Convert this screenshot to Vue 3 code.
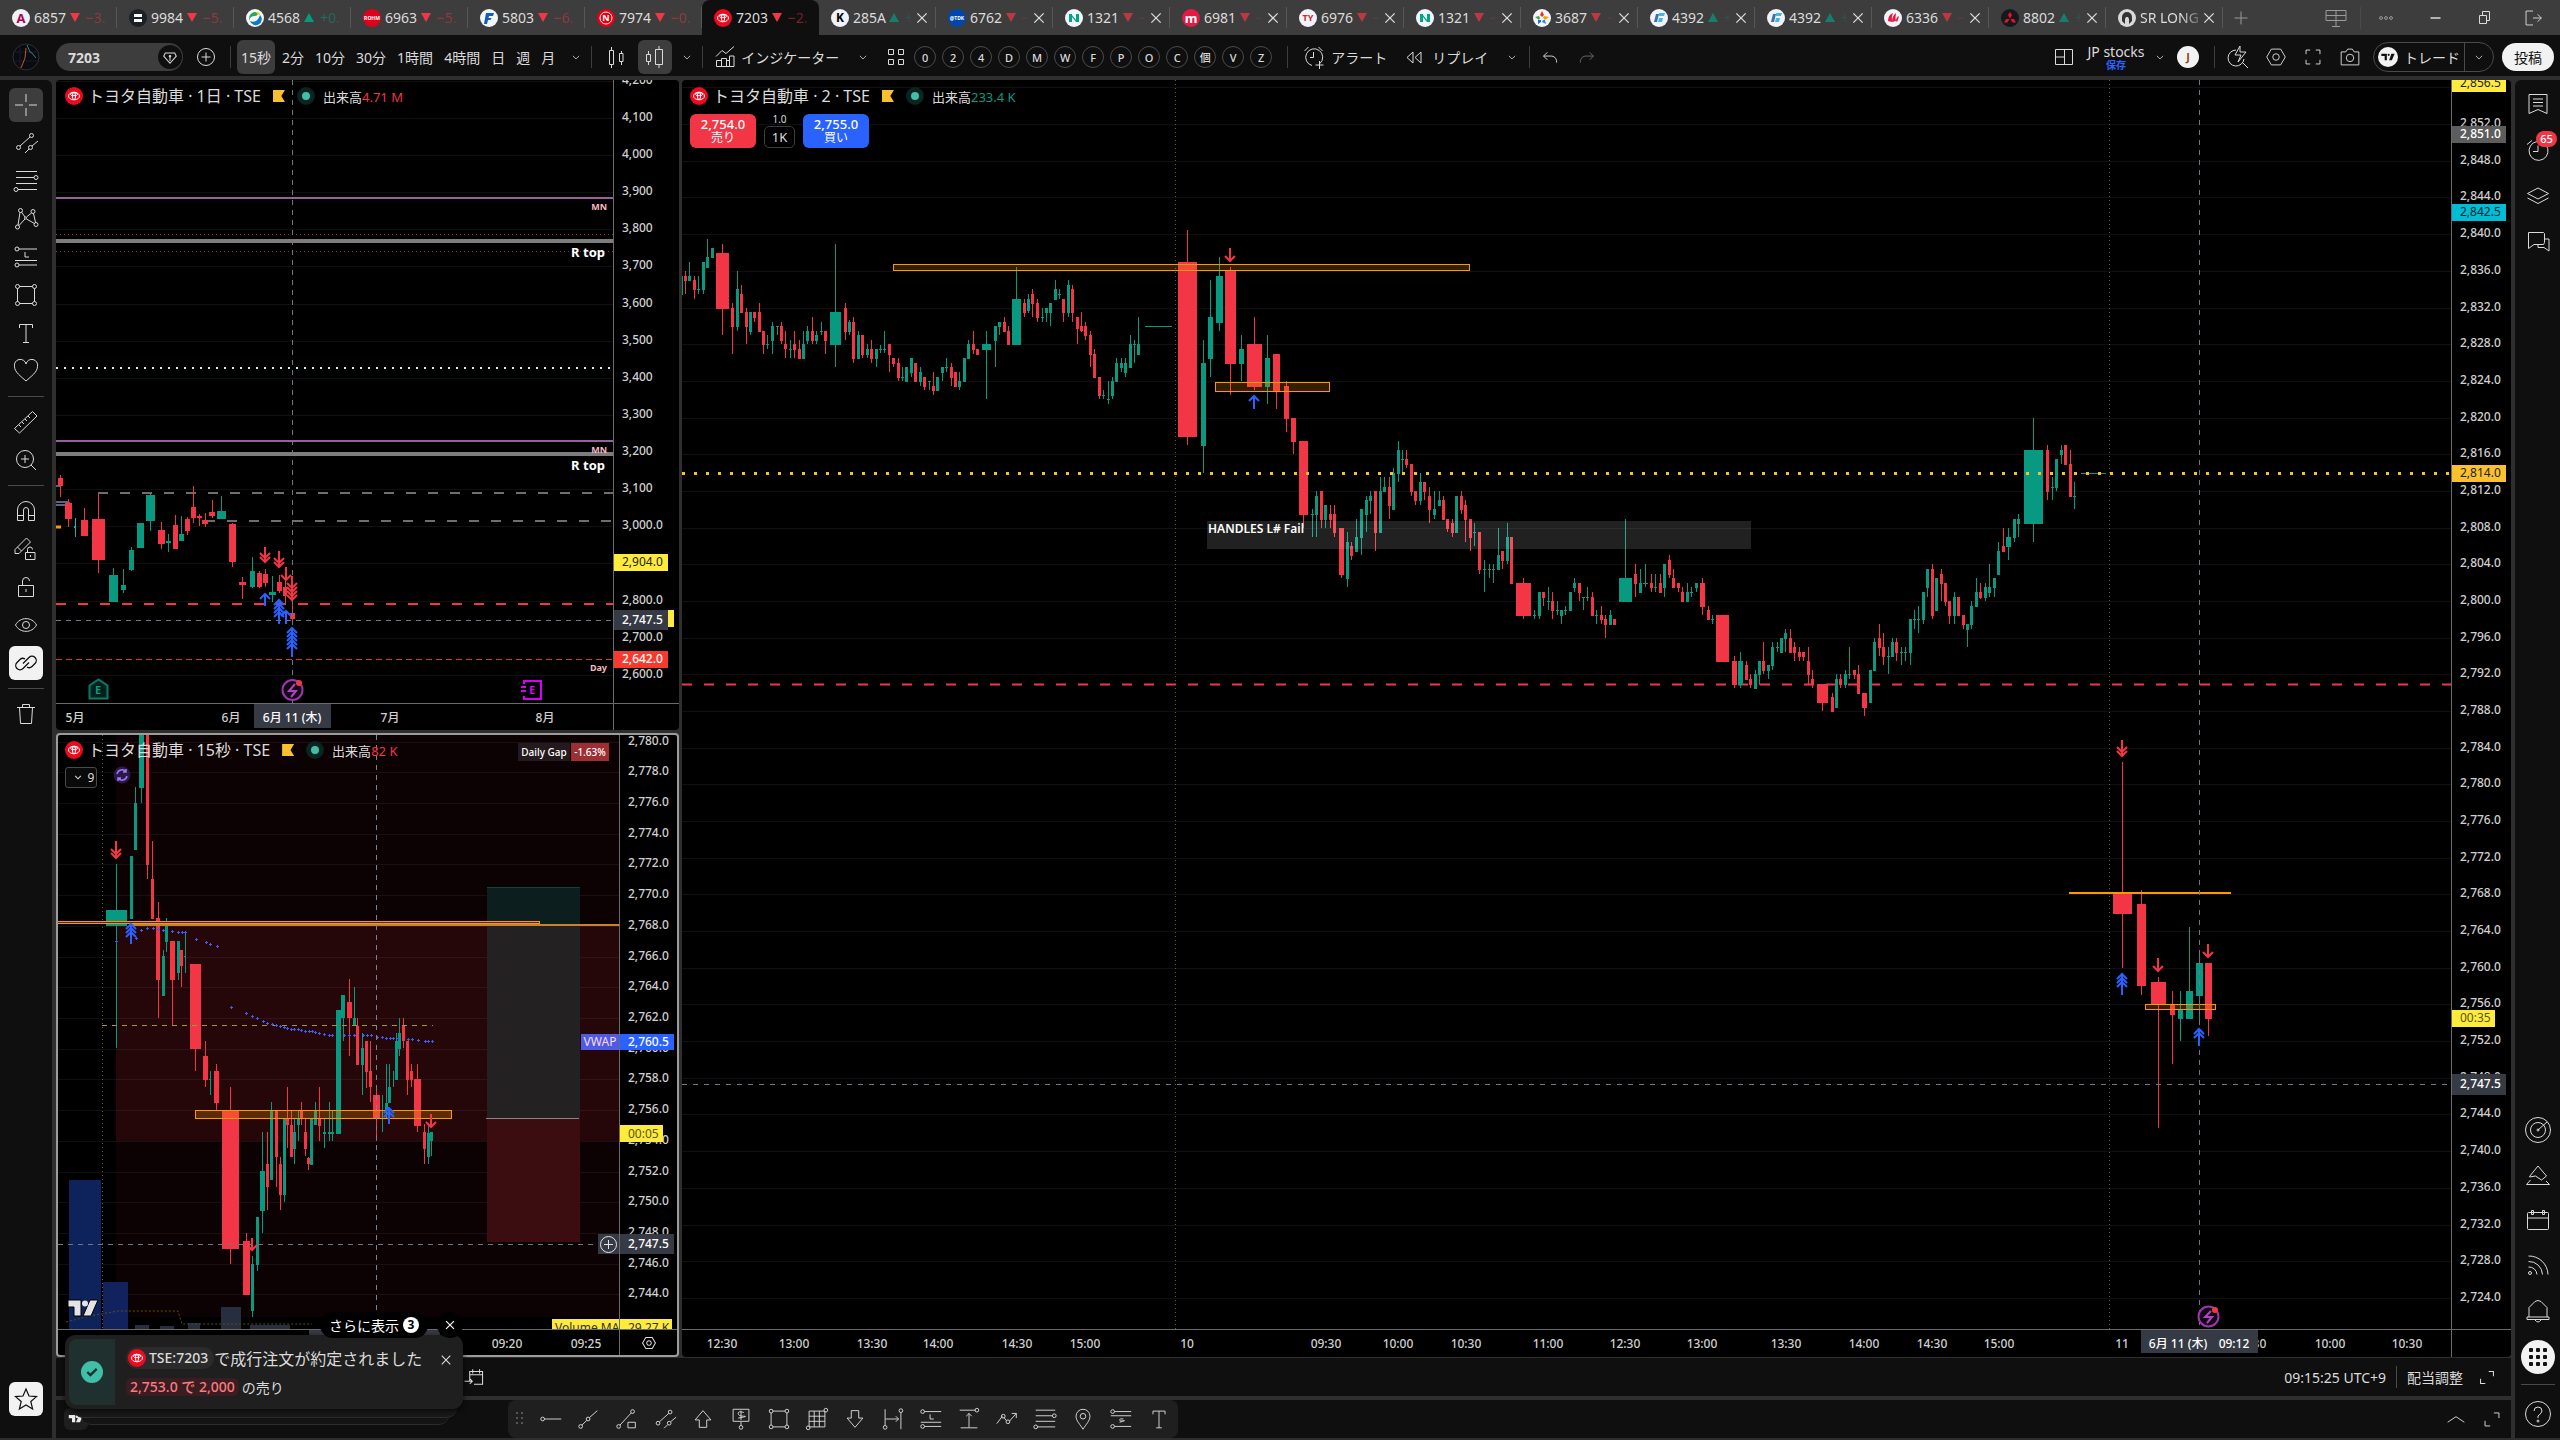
<script setup>
import { h } from 'vue'

const ring = (x, y, r = 2) => `M${x - r} ${y}a${r} ${r} 0 1 0 ${r * 2} 0a${r} ${r} 0 1 0 ${-r * 2} 0z`

const paths = {
  cross: 'M3 14h8M17 14h8M14 3v8M14 17v8',
  trend: ring(19.5, 6.5) + ring(6.5, 18.5) + 'M8 17L18 8M13 24l4-4' + ring(18.5, 18.5) + 'M20 17l6-5',
  fib: 'M4 4.5h21M4 10.5h18M4 16.5h21M6 22.5h19' + ring(24, 10.5) + ring(4, 22.5),
  pattern: ring(8.5, 5.5) + ring(21, 6.5) + ring(5.5, 22) + ring(24, 19.5) + ring(13.5, 13, 1) + 'M8 7.5L6 20M9.5 7l3.5 5M14.5 12L19.5 8M21.5 8.5L23.5 17.5M7 20.5L13 14M14.5 14l8 4.5',
  long: ring(5, 6) + ring(5, 22) + 'M7 6h18M3 17.5h22M7 22h18M13 9v5h4',
  rect: ring(5.5, 5.5) + ring(22.5, 5.5) + ring(5.5, 22.5) + ring(22.5, 22.5) + 'M7.5 5.5h13M7.5 22.5h13M5.5 7.5v13M22.5 7.5v13',
  text: 'M7.5 9V5.5h13V9M14 5.5v18M11 23.5h6',
  heart: 'M14 24C9 19.5 2.5 15 2.5 9.5a5.5 5.5 0 0 1 11.5-2.5a5.5 5.5 0 0 1 11.5 2.5C25.5 15 19 19.5 14 24z',
  ruler: 'M2.5 20.5L20.5 3.5l4.5 4.5L7.5 25zM7 17l2 2M10 14l2 2M13 11l2 2M16 8l2 2',
  zoomIn: ring(13, 13, 8.5) + 'M9 13h8M13 9v8M19 19l5 5',
  magnet: 'M5.5 23.5V13a8.5 8.5 0 0 1 17 0v10.5h-6V13a2.5 2.5 0 0 0-5 0v10.5zM5.5 18.5h6M16.5 18.5h6',
  pencil: 'M3 18.5v-4L14.5 3l4 4L7 18.5zM5.5 12l4 4M13.5 17.5h9.5v7h-9.5zM15.5 17.5v-3a2.5 2.5 0 0 1 5 0M18.5 20v2',
  lock: 'M6.5 12.5h15v11h-15zM10.5 12.5V8a3.5 3.5 0 0 1 7 0M14 16v3',
  eye: 'M3.5 14C8 5.5 20 5.5 24.5 14C20 22.5 8 22.5 3.5 14z' + ring(14, 14, 3.5),
  link: 'M11 14.5l6-6a4 4 0 0 1 6 6l-3 3a4 4 0 0 1-5 .5M17 13.5l-6 6a4 4 0 0 1-6-6l3-3a4 4 0 0 1 5-.5',
  trash: 'M5 7.5h18M7.5 7.5l1 16h11l1-16M10.5 7.5v-3h7v3',
  star: 'M14 4l3 7 7.5.6-5.7 4.9 1.8 7.5L14 20l-6.6 4 1.8-7.5-5.7-4.9L11 11z',
  plus: ring(14, 14, 8.5) + 'M9.5 14h9M14 9.5v9',
  add: 'M14 7.5v13M7.5 14h13',
  x: 'M9 9l10 10M19 9L9 19',
  down: 'M10 12.5l4 4 4-4',
  up: 'M5 17.5l9-6 9 6',
  candles: 'M7.5 7.5h4v14h-4zM9.5 4v3.5M9.5 21.5V25M17.5 10.5h3.5v8h-3.5zM19.5 8v2.5M19.5 18.5V22',
  hollow: 'M5.5 11.5h4v7h-4zM7.5 8v3.5M7.5 18.5V22M14.5 6.5h7v15h-7zM18 3v3.5M18 21.5V25',
  indicators: 'M5 13.5l6-6 4 3 8-7M5.5 23.5v-6h5v6zM10.5 23.5v-8h5v8zM15.5 17.5h3v6h-3zM18.5 23.5V13h4.5v10.5z',
  grid: 'M6.5 6.5h5v5h-5zM16.5 6.5h5v5h-5zM6.5 16.5h5v5h-5zM16.5 16.5h5v5h-5z',
  alarm: 'M20 20.5A8.5 8.5 0 1 0 12 22.5M13.5 9v5.5H10M19.5 18v8M15.5 22h8M4.5 8l4-4M22.5 8l-4-4',
  rewind: 'M13 9l-6 5.5 6 5.5zM21 9l-6 5.5 6 5.5z',
  undo: 'M10 9l-4 4 4 4M6 13h9a6 6 0 0 1 5 7',
  redo: 'M18 9l4 4-4 4M22 13h-9a6 6 0 0 0-5 7',
  layout: 'M5.5 6.5h17v15h-17zM14.5 6.5v15M5.5 14h9',
  flash: 'M12 7a8 8 0 1 0 8 9M19 20l5 5M16 3l-5 9h6l-3 7 8-10h-6z',
  hex: 'M9 5.5h10l5 8.5-5 8.5H9L4 14z' + ring(14, 14, 3.5),
  full: 'M6.5 11V6.5H11M17 6.5h4.5V11M21.5 17v4.5H17M11 21.5H6.5V17',
  camera: 'M4.5 8.5h5l2-3h5l2 3h5v14h-19z' + ring(14, 15, 4),
  monitor: 'M4 6.5h20v10H4zM14 6.5v16M10 22.5h8M4 11.5h20',
  dots: ring(7, 14) + ring(14, 14) + ring(21, 14),
  minimise: 'M9.5 14h10',
  restore: 'M9.5 11.5h7v8h-7zM12.5 11.5v-4h7v9h-3',
  exit: 'M14 6.5H6.5v15H14M14 14h9M19 10l4 4-4 4',
  pen: 'M8 9h12l2 4-8 9-8-9zM14 13v6' + ring(14, 13, 1),
  note: 'M5 4.5h18v19l-9-4-9 4zM9 9h10M9 12.5h10M9 16h10',
  alertR: 'M22 9A9.5 9.5 0 1 1 13 5.5M14 9.5v6h-5M3 8.5l5-4',
  layers: 'M14 6l10.5 5.5L14 17 3.5 11.5zM3.5 16L14 21.5 24.5 16',
  chat: 'M4.5 4.5h15l1 1v9l-1 2H10l-5.5 4zM20.5 11h4.5v12l-5-3.5h-6v-3',
  radar: ring(14, 14, 12.5) + ring(14, 14, 7.5) + ring(14, 14, 1) + 'M14 14l9-8',
  idea: 'M5.5 15.5L14 5l8.5 10-5 4-6-4-6 1zM6.5 19L2.5 23.5h23L22 20',
  calendar: 'M4.5 6.5h19q1 0 1 1v15q0 1-1 1h-19q-1 0-1-1v-15q0-1 1-1zM3.5 12h21M7.5 4.5h2v4h-2zM18.5 4.5h2v4h-2z',
  rss: ring(6, 22, 1.5) + 'M4.5 5A19 19 0 0 1 24 23.5M4.5 10.5A13.5 13.5 0 0 1 18.5 23.5M4.5 16A8 8 0 0 1 13 23.5',
  bell: 'M5 21v-9.5L11 5.5q3-2 6 0l6 6V21M3 21h22v2.5H3zM11 24q3 4 6 0',
  help: ring(14, 14, 12.5) + 'M10 11q0-4 4-4t4 4q0 2-4 5v2' + ring(14, 21, 1),
  date: 'M9 18.5V7.5h15v15H14M9 11.5h15M12.5 5v5M20.5 5v5M3 19h9M9 16l3 3-3 3',
  expand: 'M16 7.5h5.5V13M6.5 16v5.5H12',
  hray: ring(5, 14) + 'M7 14h18',
  tline: ring(5, 22) + ring(13, 14) + 'M6.5 20.5l5-5M14.5 12.5L23 5',
  tbox: ring(5, 22) + ring(20, 6) + 'M6.5 20.5L18.5 7.5M15 17.5h8v6h-8z',
  arrowUp: 'M14 5l8.5 10H18v8h-8v-8H5.5z',
  arrowDown: 'M14 23l8.5-10H18V5h-8v8H5.5z',
  price: 'M5.5 3.5h17v13h-17zM14 17v4' + ring(14, 23) + 'M17 7q-6-2-6 1t6 3-6 2M14 5v10',
  table: 'M5.5 5.5h17v17h-17zM11 5.5v17M16.5 5.5v17M5.5 11h17M5.5 16.5h17' + ring(23.5, 4.5) + ring(4.5, 23.5),
  drange: 'M5.5 3.5V21M22.5 7v18M6 14h14M17 11l3 3-3 3' + ring(5.5, 23) + ring(22.5, 5),
  prange: 'M4 4.5h17M5 23.5h18M14 8v15M11 11l3-3 3 3' + ring(22.5, 4.5),
  wave: 'M3 19l6-8M10.5 12l3 4M16.5 16.5L24 8M19 8h5v5' + ring(10, 11) + ring(15, 17),
  pin: 'M14 25C11 20 6.5 16 6.5 11a7.5 7.5 0 0 1 15 0C21.5 16 17 20 14 25z' + ring(14, 11, 3),
  short: ring(5, 6) + ring(5, 22) + 'M7 6h18M3 10.5h22M7 22h18M16.5 14q-4-1-4 1t4 1-4 1.5',
}

const Icon = (p) => h('svg', {
  viewBox: '0 0 28 28', width: p.s || 28, height: p.s || 28, fill: 'none',
  stroke: 'currentColor', 'stroke-width': p.w || 1, 'aria-hidden': 'true', style: { flex: 'none', display: 'block' },
}, [h('path', { d: paths[p.n] })])
Icon.props = ['n', 's', 'w']

const Toyota = (p) => h('svg', { viewBox: '0 0 18 18', width: p.s || 18, height: p.s || 18, 'aria-hidden': 'true', style: { flex: 'none', display: 'block' } }, [
  h('circle', { cx: 9, cy: 9, r: 9, fill: '#eb0a1e' }),
  h('g', { fill: 'none', stroke: '#fff', 'stroke-width': 1 }, [
    h('ellipse', { cx: 9, cy: 9, rx: 5.5, ry: 3.8 }),
    h('ellipse', { cx: 9, cy: 9, rx: 1.6, ry: 3.6 }),
    h('ellipse', { cx: 9, cy: 7.2, rx: 3.6, ry: 1.5 }),
  ]),
])
Toyota.props = ['s']

const tabs = [
  { c: '6857', d: 'r', v: '−3.1', bg: '#f0f0f5', fg: '#a8085c', t: 'A', fs: 13 },
  { c: '9984', d: 'r', v: '−5.2', bg: '#1c2126', svg: 'M5 5h8v3H5zM5 10h8v3H5z' },
  { c: '4568', d: 'g', v: '+0.4', bg: '#f4f6fa', shape: 'swirl' },
  { c: '6963', d: 'r', v: '−5.1', bg: '#e0001b', fg: '#fff', t: 'ROHM', fs: 5 },
  { c: '5803', d: 'r', v: '−6.2', bg: '#f4f6fa', shape: 'f' },
  { c: '7974', d: 'r', v: '−0.5', bg: '#e60012', fg: '#fff', t: 'N', fs: 9, ringed: true },
  { c: '7203', d: 'r', v: '−2.1', toyota: true, active: true },
  { c: '285A', d: 'g', v: '+', bg: '#f0f3fa', fg: '#000', t: 'K', fs: 12, x: true },
  { c: '6762', d: 'r', v: '−', bg: '#0046ad', fg: '#fff', t: '@TDK', fs: 5, x: true },
  { c: '1321', d: 'r', v: '−', bg: '#f0f6fa', shape: 'n', x: true },
  { c: '6981', d: 'r', v: '−', bg: '#e11b44', fg: '#fff', t: 'm', fs: 13, x: true },
  { c: '6976', d: 'r', v: '−', bg: '#f0f3fa', fg: '#d8232f', t: 'TY', fs: 9, x: true },
  { c: '1321', d: 'r', v: '−', bg: '#f0f6fa', shape: 'n', x: true },
  { c: '3687', d: 'r', v: '−', bg: '#f6f6f8', shape: 'star', x: true },
  { c: '4392', d: 'g', v: '+', bg: '#f0f3fa', shape: 'fig', x: true },
  { c: '4392', d: 'g', v: '+', bg: '#f0f3fa', shape: 'fig', x: true },
  { c: '6336', d: 'r', v: '−', bg: '#f0f3fa', shape: 'leaf', x: true },
  { c: '8802', d: 'g', v: '+', bg: '#15181c', shape: 'mitsu', x: true },
  { c: 'SR LONG ?', d: '', v: '', bg: '#d8d8d8', shape: 'head', x: true },
]
const shapes = {
  swirl: [['M9 3a6 6 0 0 0-5 9q-1-5 5-5 2 0 3-2-1-2-3-2z', '#29a65a'], ['M14 6a6 6 0 1 1-10 6q7 3 10-6z', '#0a7ac2'], ['M10 3q4 0 4 3l-3-1z', '#f3c300']],
  f: [['M6 4h8l-1 3H9l-.5 2h3l-1 2H8l-1 4H4z', '#0c5fc0']],
  n: [['M4 5h3v8H4zM11 5h3v8h-3z', '#00a783'], ['M7 6l4 5v2L7 8z', '#00a783']],
  star: [['M9 2l2 4-2 2-2-2z', '#e5352b'], ['M16 8l-4 3-2-2 1-2z', '#f0a400'], ['M13 15l-4-2 1-2 2 0z', '#1f8fd6'], ['M5 15l0-4h3l0 2z', '#1f6fd6'], ['M2 8l4-1 1 2-1 2z', '#3aa655']],
  fig: [['M4 13l2-8h3l-2 8z', '#3a6fb5'], ['M9 4h6l-1 3H9zM9 9h4l-1 4H8z', '#49b4dc']],
  leaf: [['M4 12q0-6 5-8-2 4-1 9zM8 13q0-6 4-9-1 5 0 8zM12 12q0-4 3-5-1 4-2 6z', '#e8173c']],
  mitsu: [['M9 3l2 3-2 3.500L7 6zM8.500 10l-2 3.500H3l2-3.500zM9.500 10l2 3.500H15l-2-3.500z', '#e8132a']],
  head: [['M9 3a5 5 0 0 1 5 5v4l-3 3v-5l-1-2H8l-1 2v5l-3-3V8a5 5 0 0 1 5-5z', '#333']],
}

const intervals = ['15秒', '2分', '10分', '30分', '1時間', '4時間', '日', '週', '月']
const templates = ['0', '2', '4', 'D', 'M', 'W', 'F', 'P', 'O', 'C', '個', 'V', 'Z']
const leftTools = ['cross', 'trend', 'fib', 'pattern', 'long', 'rect', 'text', 'heart', '-', 'ruler', 'zoomIn', '-', 'magnet', 'pencil', 'lock', 'eye', 'link', '-', 'trash']
const favTools = ['hray', 'tline', 'tbox', 'trend', 'arrowUp', 'price', 'rect', 'table', 'arrowDown', 'drange', 'long', 'prange', 'wave', 'fib', 'pin', 'short', 'text']

/* Candles: colour + x, high, body top, body bottom, low, optional body width, in samples of the source grid. */
function candles(src, ox, oy, kx, ky) {
  return src.trim().split(/\s*;\s*/).filter(Boolean).map((row) => {
    const n = row.slice(1).split(' ').map(Number)
    const [x, wt, bt, bb, wb, w = 6] = n
    const cx = Math.round(ox + x / kx - 0.5)
    const bw = Math.max(1, Math.round(w / kx))
    const y = (v) => Math.round(oy + v / ky)
    return {
      f: row[0] === 'g' ? '#089981' : row[0] === 'c' ? '#22a9c4' : '#f23645',
      cx, wt: y(wt), wh: Math.max(1, y(wb) - y(wt)),
      x: cx - Math.floor(bw / 2), w: bw, bt: y(bt), bh: Math.max(1, y(bb) - y(bt)),
    }
  })
}

const mainA = `g4 171 228 285 297;r12 213 228 243 282;g21 186 228 243 243;r32 228 240 270 297;g41 228 267 270 282;g52 186 186 270 282;g61 117 171 204 204;g72 144 144 174 174;r95 132 159 327 405 29;r117 309 324 381 462;g128 213 267 381 393;r138 255 282 339 339;r149 324 336 381 432;g158 336 336 396 405;r167 336 336 354 366;r178 309 336 396 396;r187 393 393 434 462;g197 405 432 435 447;g207 366 378 423 462;g218 378 378 381 405;r227 366 378 423 432;r236 393 432 447 474;g247 420 447 450 474;r256 393 432 450 474;r267 420 447 477 477;g276 393 432 477 477;g285 378 393 423 432;r296 351 393 423 432;g306 393 405 423 432;g317 366 393 396 405;r326 393 393 423 462;g348 132 336 435 501 25;r370 309 324 396 420;g379 360 366 396 405;r388 351 366 477 489;g400 393 405 477 477;r409 405 405 465 474;g420 432 447 465 474;r429 420 447 477 489;g440 447 447 477 501;g449 435 447 450 460;g458 393 447 450 460;r469 432 432 465 516;r478 474 474 492 501;r490 474 489 535 543;g498 501 531 535 543;g507 501 501 546 546;g518 474 474 519 531;r527 489 489 546 546;g538 501 516 546 558;r547 531 531 561 570;g558 543 543 546 570;r568 516 558 573 585;g577 531 531 573 573;g588 501 501 519 543;g597 474 501 504 516;r608 489 501 535 558;r617 516 516 561 561;g626 516 543 561 570;g637 474 474 546 546;g646 420 432 477 477;r657 393 432 450 462;r667 447 447 465 465;g686 393 432 450 597 21;g707 378 378 423 501;g716 366 366 381 405;r727 351 366 396 396;r736 378 393 435 435;g754 201 297 435 435 20;r771 297 309 339 351;g780 282 297 333 339;r790 267 282 312 351;r801 297 309 354 366;g811 324 351 354 366;g821 324 324 339 366;g830 309 309 339 378;g841 240 267 300 300;g850 267 282 285 297;r859 297 297 339 366;g870 240 255 339 351;r880 255 267 339 366;r890 351 351 387 432;r900 336 378 393 396;r908 366 378 408 420;r919 393 405 465 501;r928 447 462 534 534;r940 531 531 588 597;g949 570 585 588 597;g959 543 597 600 612;g969 531 543 588 597;g978 474 489 546 546;g988 474 489 504 516;g998 474 489 519 531;g1009 405 432 504 504;g1018 420 432 435 489;g1027 351 432 465 465;g1072 379 379 382 382 60;r1137 90 186 711 735 42;g1172 420 489 738 819 11;g1188 240 351 477 531 11;g1208 171 228 369 393 15;r1233 201 211 492 585 24;g1257 405 447 492 543 11;r1287 351 432 561 570 34;g1316 405 474 561 612 12;r1336 462 462 576 627 16;r1358 543 558 657 696 11;r1374 654 654 726 762 11;r1397 723 723 945 984 20;g1417 927 942 945 1011;g1426 873 888 945 1011;r1437 873 873 960 984;g1446 915 915 960 984;r1457 915 942 960 984;r1466 915 942 999 1011`
const mainB = `r22 444 444 585 594 9;g34 456 486 597 621;r42 486 498 528 540 5;g52 417 471 516 516 5;g62 387 387 474 525;g72 348 360 405 456;g79 333 348 363 402;r89 333 333 459 513;g99 291 333 459 459;g107 291 321 336 336;r117 291 321 378 417;g124 264 279 390 390;g134 183 210 282 306;g142 210 237 240 276;r150 210 237 255 264;r160 252 252 336 348;r168 333 333 363 375;g177 279 306 363 375;r185 306 306 336 360;r195 321 348 390 429;g205 333 387 405 417;g215 333 360 378 378;r222 348 360 420 420;r230 417 417 447 456;r240 417 429 459 471;g248 348 348 459 459;r258 333 348 390 402;r266 360 375 420 486;r275 417 417 474 513;g283 429 456 459 498;r293 456 456 570 582;g303 540 567 570 636;g313 552 567 570 594;g320 552 567 570 609;g330 444 525 570 570;r338 513 513 543 567;g348 429 471 543 552;r356 471 471 612 612;r379 594 609 708 717 29;g401 690 705 708 717;g411 636 636 708 717;r418 636 636 654 678;g428 621 663 666 690;r436 636 663 693 717;g446 663 690 693 705;g454 690 690 708 732;g462 678 690 693 705;g471 636 636 693 693;g479 594 609 624 636;r489 609 609 639 663;g497 651 651 654 690;g505 621 651 654 663;r515 636 651 708 708;g522 690 705 708 732;r532 678 705 720 732;r540 705 717 735 774;g550 690 705 735 735;r558 717 717 735 735;g579 417 594 666 666 26;r599 552 582 612 651;g609 567 609 639 639;g618 552 609 612 621 10;r630 582 609 624 636;g638 582 621 624 636;r648 582 609 639 639;g656 552 552 624 651;r665 525 540 585 594;r673 567 594 624 624;r683 609 609 624 636;r691 621 636 666 666;g701 609 636 666 666;g709 621 636 639 651;g718 609 609 624 636;r730 594 609 682 705 10;r742 678 690 720 720;g750 705 717 720 732;r769 705 705 846 846 25;r793 828 843 915 924 10;g804 816 843 915 924 9;r816 843 855 900 900;r824 882 897 915 924;g834 870 882 927 927;g842 843 843 885 915;r850 786 843 873 882;g859 855 855 873 897;g867 786 801 858 870;g877 786 801 804 816;g885 774 774 819 819;g893 747 759 777 816;r903 747 774 819 819;r910 786 801 819 843;r920 801 816 831 843;r928 816 816 831 843;r938 801 843 885 912;r946 870 897 915 924;r965 912 912 969 993 21;r985 939 951 996 996;g993 882 897 984 984;r1001 882 897 915 924;g1010 870 882 915 924;g1018 801 882 885 897;r1028 870 870 885 897;r1036 855 882 942 942;r1048 939 939 984 1008 10;g1059 870 870 969 969;g1067 774 786 873 873;r1077 732 774 804 828;r1085 759 801 831 855;g1095 801 828 831 882;g1103 774 786 831 831;r1110 774 786 819 843;g1120 801 816 819 855;g1128 801 816 819 843;g1138 717 717 819 855;g1146 690 717 720 747;g1153 678 717 720 759;g1163 636 636 720 732;g1171 567 567 624 651;r1181 552 567 708 717;g1189 594 594 693 693;r1199 567 582 612 663;r1206 609 609 666 678;r1214 663 663 708 732;g1224 636 651 708 732;r1232 651 651 708 708;r1242 705 705 735 747;g1249 732 732 750 801;g1257 663 678 735 747;g1267 594 636 681 681;r1275 609 636 654 657;g1285 609 621 654 663;g1293 552 621 639 651;g1302 594 594 624 651;g1310 486 513 585 585;r1320 444 498 516 516;g1330 444 471 501 540 10;g1342 417 417 474 486;g1349 402 417 432 471 5;g1378 114 210 432 486 37;r1406 195 210 336 360;g1416 291 321 324 360;g1424 237 237 324 333;g1434 195 210 225 252;r1442 195 195 255 255;r1451 210 252 351 351;g1459 306 348 351 387;g1496 279 279 282 282 49`
const mainC = `r247 131 409 453 567 57;r304 403 432 607 625 27;r355 587 598 645 907 45;r397 617 645 667 771 15;g421 617 656 676 723 15;g448 481 617 676 676 21;g478 537 557 627 683 21;r505 557 557 676 712 21`
const dayD = `r137 958 964 982 1007 12;r156 1013 1022 1058 1077 16;c171 1056 1074 1080 1100 5;r192 1034 1061 1098 1098 16;r224 1000 1058 1153 1183 30;g257 1171 1188 1250 1250 20;g280 1174 1210 1222 1229 11;g299 1122 1129 1176 1178 12;g319 1068 1068 1125 1125 16;g342 1000 1003 1063 1086 20;r367 1065 1084 1116 1128 16;g383 1094 1109 1113 1134 12;r398 1050 1072 1128 1128 11;g412 1051 1094 1109 1109 12;r426 1054 1059 1087 1095 12;r440 982 1031 1056 1068 12;r453 1048 1051 1057 1075 11;r467 1045 1061 1070 1077 13;r483 1015 1042 1051 1056 13;g503 1005 1040 1058 1058 21;r528 1068 1070 1158 1168 16;r551 1192 1204 1211 1242 16;g573 1145 1178 1215 1217 11;r590 1178 1183 1215 1217 11;r603 1174 1186 1207 1215 11;g619 1190 1227 1234 1250 16;r635 1188 1204 1225 1229 12;r648 1200 1215 1236 1255 8;r664 1190 1276 1289 1291 11`
const secD = `g265 314 414 448 714 48;g298 296 296 433 433 7;g308 146 181 283 283 6;g322 20 20 148 181 11;r336 20 20 316 346 7;r347 264 346 433 433 7;r360 396 431 566 649 10;g371 501 514 601 601 7;g378 431 446 483 505 6;r392 481 481 566 666 11;g405 481 481 551 566 7;r412 501 501 535 581 6;g421 463 513 516 550 5;r445 531 531 716 764 26;r467 699 731 784 800 11;g478 764 781 784 817 5;r492 749 764 834 850 11;r524 799 850 1152 1185 39;r560 1117 1135 1252 1252 16;g573 1168 1185 1287 1300 7;g585 1082 1082 1187 1200 7;g596 898 982 1069 1117 11;r607 898 967 1018 1067 7;g617 832 850 1001 1001 6;r628 850 850 952 1018 7;r638 952 966 1034 1067 7;g647 867 867 1034 1050 6;r653 799 867 883 933;r662 850 883 952 952;g669 867 898 934 967;g678 850 867 883 916;r685 832 850 869 883;r693 867 898 934 950;r701 952 954 968 981;g707 867 867 969 969;g716 832 850 883 883;r726 799 867 885 916;g738 867 898 901 932;g748 832 898 901 918;g755 850 898 901 916;g769 632 632 902 902 11;g780 599 599 650 699 8;r794 564 614 650 731 11;g805 581 650 666 666;r813 649 666 751 751 7;g824 681 714 751 817 7;r833 699 699 766 802 7;r842 699 764 800 832;r856 799 817 868 918 16;g869 817 834 866 898 3;g878 749 834 850 866;g885 749 799 834 834 7;g893 764 784 800 800 3;g900 681 699 784 784 7;g908 649 681 716 731;r916 649 664 699 714;r926 699 699 784 817 7;r935 749 764 784 799;r949 749 782 884 898 16;r965 881 898 934 967 7;g974 885 900 952 967 7;g981 898 898 918 950 7`

const mainCandles = [...candles(mainA, 680, 200, 2.24, 3), ...candles(mainB, 1330, 380, 1.96, 3), ...candles(mainC, 2040, 700, 3, 2.119)]
const dayCandles = candles(dayD, 0, 60, 2.272, 2.306)
const secCandles = candles(secD, 0, 720, 2.272, 2.178)

const vwap = '264,481 308,474 321,458 334,454 347,452 360,455 371,457 391,460 405,461 414,461 421,462 445,478 467,484 478,487 492,493 524,626 560,638 573,645 585,650 597,656 607,659 617,662 628,664 637,667 645,669 653,670 661,672 669,673 678,674 685,675 693,677 701,678 708,678 716,680 725,681 737,684 747,686 755,687 781,687 794,685 805,685 824,686 833,687 842,687 856,690 869,691 878,692 885,693 893,693 904,693 926,694 935,695 950,696 965,699 973,700 981,700'
  .split(' ').map((p) => p.split(',').map(Number)).map(([x, y]) => `M${Math.round(x / 2.272) - 1} ${Math.round(720 + y / 2.178)}.5h3m-1.5-1.5v3`).join('')

const arrow = ([dir, x, tip, tail, n]) => {
  const s = dir === 'd' ? -1 : 1
  let d = `M${x} ${tail}V${tip}`
  for (let i = 0; i < n; i++) d += `M${x - 5} ${tip + s * (5 + i * 4)}L${x} ${tip + s * i * 4}L${x + 5} ${tip + s * (5 + i * 4)}`
  return { d, c: dir === 'd' ? '#f23645' : '#2962ff' }
}
const mainArrows = [['d', 1230, 261, 248, 1], ['u', 1254, 396, 409, 1], ['d', 2122, 756, 740, 2], ['u', 2122, 974, 995, 3], ['d', 2158, 971, 958, 1], ['d', 2208, 957, 944, 1], ['u', 2199, 1029, 1046, 2]].map(arrow)
const dayArrows = [['d', 265, 562, 547, 2], ['d', 279, 567, 551, 2], ['d', 286, 580, 567, 1], ['d', 292, 600, 576, 4], ['u', 265, 594, 606, 1], ['u', 279, 600, 624, 4], ['u', 286, 611, 624, 1], ['u', 292, 628, 657, 5]].map(arrow)
const secArrows = [['d', 116, 858, 841, 2], ['u', 131, 924, 944, 3], ['u', 389, 1108, 1124, 2], ['d', 431, 1127, 1114, 1], ['d', 252, 1250, 1238, 1]].map(arrow)

const money = (p) => p.toLocaleString('en-US', { minimumFractionDigits: 1 })
const scale = (from, to, step, fn, label = money) => {
  const out = []
  for (let p = from; p >= to; p -= step) out.push({ y: Math.round(fn(p)), t: label(p) })
  return out
}
const mainScale = scale(2856, 2724, 4, (p) => 711 + (2788 - p) * 9.17)
const dayScale = scale(4200, 2600, 100, (p) => 118 + (4100 - p) * 0.3712, (p) => (p > 3000 ? p.toLocaleString('en-US') : money(p)))
const secScale = scale(2780, 2744, 2, (p) => 741.5 + (2780 - p) * 15.36)

const mainTimes = [[722, '12:30'], [794, '13:00'], [872, '13:30'], [938, '14:00'], [1017, '14:30'], [1085, '15:00'], [1187, '10'], [1326, '09:30'], [1398, '10:00'], [1466, '10:30'], [1548, '11:00'], [1625, '12:30'], [1702, '13:00'], [1786, '13:30'], [1864, '14:00'], [1932, '14:30'], [1999, '15:00'], [2122, '11'], [2251, '09:30'], [2330, '10:00'], [2407, '10:30']]
const dayTimes = [[75, '5月'], [231, '6月'], [390, '7月'], [545, '8月']]
const secTimes = [[507, '09:20'], [586, '09:25']]
</script>

<template>
  <div class="app">
    <nav class="tabs">
      <div v-for="(t, i) in tabs" :key="i" class="tab" :class="{ active: t.active }">
        <Toyota v-if="t.toyota" />
        <svg v-else class="logo" viewBox="0 0 18 18" width="18" height="18">
          <circle cx="9" cy="9" r="9" :fill="t.bg" />
          <circle v-if="t.ringed" cx="9" cy="9" r="6" fill="none" stroke="#fff" />
          <text v-if="t.t" x="9" :y="9 + t.fs * 0.36" text-anchor="middle" :font-size="t.fs" font-weight="700" :fill="t.fg">{{ t.t }}</text>
          <path v-if="t.svg" :d="t.svg" fill="#fff" />
          <template v-if="t.shape"><path v-for="(s, k) in shapes[t.shape]" :key="k" :d="s[0]" :fill="s[1]" /></template>
        </svg>
        <span class="code" :class="{ long: !t.d }">{{ t.c }}</span>
        <i v-if="t.d" class="tri" :class="[t.d, { dim: t.x }]"></i>
        <span v-if="t.d" class="chg" :class="[t.d, { dim: t.x }]">{{ t.v }}</span>
        <button v-if="t.x" class="close" aria-label="閉じる"><Icon n="x" s="26" w="1.4" /></button>
      </div>
      <button class="win add" aria-label="追加"><Icon n="add" /></button>
      <div class="grow"></div>
      <button class="win dimmed" aria-label="モニター"><Icon n="monitor" /></button>
      <i class="vsep"></i>
      <button class="win dots" aria-label="メニュー"><Icon n="dots" s="20" w="1.4" /></button>
      <button class="win" aria-label="最小化"><Icon n="minimise" w="1.5" /></button>
      <button class="win" aria-label="元に戻す"><Icon n="restore" /></button>
      <button class="win" aria-label="終了"><Icon n="exit" s="26" /></button>
    </nav>

    <header class="bar">
      <svg class="avatar" viewBox="0 0 28 28" width="28" height="28"><circle cx="14" cy="14" r="13" fill="#090b10" stroke="#2a303a" /><path d="M2 9h24M2 18h24M8 3v22" stroke="#171c27" /><path d="M9 25l4-10 1-10" fill="none" stroke="#c4571c" /><path d="M15 2l3 7 2 1 4 5" fill="none" stroke="#3b7f86" /></svg>
      <label class="search"><input value="7203" aria-label="シンボル検索"><span class="pen"><Icon n="pen" s="22" w="1.3" /></span></label>
      <button class="ib plus" aria-label="比較"><Icon n="plus" /></button>
      <i class="sep"></i>
      <div class="ints">
        <button v-for="(t, i) in intervals" :key="t" :class="{ on: i === 0 }">{{ t }}</button>
      </div>
      <button class="chev" aria-label="時間足"><Icon n="down" s="22" /></button>
      <i class="sep"></i>
      <button class="ib style1" aria-label="ローソク"><Icon n="candles" /></button>
      <button class="ib sel" aria-label="中空"><Icon n="hollow" /></button>
      <button class="chev" aria-label="スタイル"><Icon n="down" s="22" /></button>
      <i class="sep"></i>
      <button class="tb ind"><Icon n="indicators" />インジケーター</button>
      <button class="chev c2" aria-label="お気に入り"><Icon n="down" s="22" /></button>
      <button class="ib gridb" aria-label="テンプレート"><Icon n="grid" /></button>
      <div class="temps"><button v-for="t in templates" :key="t">{{ t }}</button></div>
      <i class="sep"></i>
      <button class="tb alarm"><Icon n="alarm" />アラート</button>
      <button class="tb replay"><Icon n="rewind" />リプレイ</button>
      <button class="chev c4" aria-label="リプレイ設定"><Icon n="down" s="22" /></button>
      <i class="sep"></i>
      <button class="ib undo" aria-label="元に戻す"><Icon n="undo" s="26" /></button>
      <button class="ib faded" aria-label="やり直す"><Icon n="redo" s="26" /></button>
      <div class="grow"></div>
      <button class="ib" aria-label="レイアウト"><Icon n="layout" /></button>
      <button class="lay"><span>JP stocks</span><b>保存</b></button>
      <button class="chev c3" aria-label="レイアウト一覧"><Icon n="down" s="22" /></button>
      <span class="jay">J</span>
      <i class="sep"></i>
      <div class="rights">
        <button class="ib" aria-label="クイック検索"><Icon n="flash" /></button>
        <button class="ib" aria-label="設定"><Icon n="hex" s="26" /></button>
        <button class="ib" aria-label="全画面"><Icon n="full" s="26" /></button>
        <button class="ib" aria-label="スナップショット"><Icon n="camera" s="26" /></button>
      </div>
      <div class="trade">
        <button class="tr"><svg viewBox="0 0 18 18" width="20" height="20"><circle cx="9" cy="9" r="9" fill="#f2f2f2" /><path d="M3 6h5v6H6V8H3zM12 6h3l-2.500 6h-2.500z" fill="#111" /><circle cx="9.600" cy="7" r="1" fill="#111" /></svg>トレード</button>
        <button class="td" aria-label="トレードメニュー"><Icon n="down" s="22" /></button>
      </div>
      <button class="post">投稿</button>
    </header>

    <div class="body">
      <aside class="left">
        <template v-for="(t, i) in leftTools" :key="i">
          <i v-if="t === '-'" class="hsep"></i>
          <button v-else :class="{ on: t === 'cross', white: t === 'link' }" :aria-label="t"><Icon :n="t" :w="t === 'link' ? 1.3 : 1" /></button>
        </template>
        <div class="grow"></div>
        <button class="white" aria-label="お気に入り"><Icon n="star" w="1.2" /></button>
      </aside>

      <main class="center">
        <div class="charts">
          <!-- daily -->
          <section class="chart day">
            <div class="pane">
              <svg class="cv"><g transform="translate(-56 -80)">
                <g fill="#101010"><rect v-for="l in dayScale" :key="l.y" x="56" :y="l.y" width="3000" height="1" /></g>
                <path d="M56 234.500H3000M56 251.500H3000" stroke="#9c2731" stroke-dasharray="1 3" />
                <path d="M56 198H3000M56 441H3000" stroke="#9a5fa0" stroke-width="2" />
                <path d="M56 241H3000M56 454H3000" stroke="#7d7d7d" stroke-width="4" />
                <path d="M56 368H3000" stroke="#c8f7f5" stroke-width="2" stroke-dasharray="2 6" />
                <path d="M98 493H3000M205 521H3000" stroke="#6e6e6e" stroke-width="2" stroke-dasharray="10 12" />
                <path d="M56 604H3000" stroke="#f23645" stroke-width="2" stroke-dasharray="10 12" />
                <path d="M56 659.500H3000" stroke="#d8392f" stroke-dasharray="6 4" />
                <path d="M56 486h5M56 502h13v3H56" stroke="#b8c6ff" fill="none" />
                <path d="M56 527h5" stroke="#ff9800" stroke-width="3" />
                <g v-for="(c, i) in dayCandles" :key="i" :fill="c.f"><rect :x="c.cx" :y="c.wt" width="1" :height="c.wh" /><rect :x="c.x" :y="c.bt" :width="c.w" :height="c.bh" /></g>
                <path d="M56 620.500H3000" stroke="#6f7787" stroke-dasharray="5 5" />
                <path d="M292.500 80V704" stroke="#6f7787" stroke-dasharray="5 5" />
                <path v-for="(a, i) in dayArrows" :key="'a' + i" :d="a.d" :stroke="a.c" stroke-width="2" fill="none" />
                <g text-anchor="end" font-weight="700">
                  <g font-size="9" fill="#f5b8c0"><text x="607" y="210">MN</text><text x="607" y="453">MN</text><text x="607" y="671">Day</text></g>
                  <g font-size="13" fill="#fff"><text x="605" y="257">R top</text><text x="605" y="470">R top</text></g>
                </g>
                <path d="M89.500 685.500l9-6 9 6v13h-18z" stroke="#0c7a68" stroke-width="2" fill="#03211c" />
                <text x="98" y="694" text-anchor="middle" font-size="11" font-weight="700" fill="#089981">E</text>
                <circle cx="292.500" cy="690" r="10" fill="#120714" stroke="#9c36ad" stroke-width="2" /><path d="M295 684l-6 7h7l-5 6" stroke="#b043c2" stroke-width="2" fill="none" /><circle cx="299" cy="683" r="3" fill="#f23645" />
                <path d="M524 684v-3h17v18h-17v-3M521 687h5M521 691h5" stroke="#d500f9" stroke-width="2" fill="none" />
                <text x="532" y="694" text-anchor="middle" font-size="11" font-weight="700" fill="#d500f9">E</text>
              </g></svg>
              <div class="legend"><Toyota /><span class="nm">トヨタ自動車 · 1日 · TSE</span><i class="flag"></i><i class="live"></i><span class="vol">出来高<em class="rd">4.71 M</em></span></div>
            </div>
            <div class="paxis"><svg class="cv"><g transform="translate(-614 -80)" font-size="12">
              <g class="lbl"><text v-for="l in dayScale" :key="l.y" x="622" :y="l.y + 3">{{ l.t }}</text></g>
              <rect x="614" y="554" width="54" height="17" fill="#ffeb3b" /><text x="622" y="566" fill="#222">2,904.0</text>
              <rect x="620" y="610" width="54" height="17" fill="#ffeb3b" />
              <rect x="614" y="610" width="54" height="20" fill="#363a45" /><text x="622" y="624" class="w">2,747.5</text>
              <rect x="614" y="651" width="54" height="17" fill="#f7392e" /><text x="622" y="663" class="w">2,642.0</text>
            </g></svg></div>
            <div class="taxis"><svg class="cv"><g transform="translate(-56 -704)" font-size="12" text-anchor="middle" class="lbl">
              <text v-for="t in dayTimes" :key="t[0]" :x="t[0]" y="722">{{ t[1] }}</text>
              <rect x="254" y="704" width="77" height="24" fill="#363a45" /><text x="292" y="722" class="w">6月 11 (木)</text>
            </g></svg></div>
            <div class="corner"></div>
          </section>

          <!-- 2 minutes -->
          <section class="chart main">
            <div class="pane">
              <svg class="cv"><g transform="translate(-682 -80)">
                <g fill="#101010"><rect v-for="l in mainScale" :key="l.y" x="682" :y="l.y" width="4000" height="1" /></g>
                <path d="M1175.500 80V1329M2109.500 80V1329" stroke="#65601c" stroke-dasharray="1 3" />
                <path d="M682 684.500H4000" stroke="#f23645" stroke-width="2" stroke-dasharray="10 12" />
                <g v-for="(c, i) in mainCandles" :key="i" :fill="c.f"><rect :x="c.cx" :y="c.wt" width="1" :height="c.wh" /><rect :x="c.x" :y="c.bt" :width="c.w" :height="c.bh" /></g>
                <path d="M682 473.500H4000" stroke="#fbc02d" stroke-width="3" stroke-dasharray="3 9" />
                <rect x="1207" y="521" width="544" height="28" fill="#fff" fill-opacity="0.130" />
                <text x="1208" y="533" font-size="12" font-weight="600" fill="#fff">HANDLES L# Fail</text>
                <g fill="#ff9800" fill-opacity="0.200" stroke="#ff9800"><rect x="893.500" y="264.500" width="576" height="6" /><rect x="1215.500" y="382.500" width="114" height="9" /><rect x="2145.500" y="1004.500" width="70" height="5" /></g>
                <path d="M2069 893H2231" stroke="#ff9800" stroke-width="2" />
                <path d="M682 1084.500H4000" stroke="#6f7787" stroke-dasharray="5 6" />
                <path d="M2199.500 80V1329" stroke="#6f7787" stroke-dasharray="5 5" />
                <path v-for="(a, i) in mainArrows" :key="'a' + i" :d="a.d" :stroke="a.c" stroke-width="2" fill="none" />
                <circle cx="2208.500" cy="1316.500" r="10" fill="#120714" stroke="#9c36ad" stroke-width="2" /><path d="M2211 1311l-6 6h7l-5 6" stroke="#b043c2" stroke-width="2" fill="none" /><circle cx="2215" cy="1310" r="3" fill="#f23645" />
              </g></svg>
              <div class="legend"><Toyota /><span class="nm">トヨタ自動車 · 2 · TSE</span><i class="flag"></i><i class="live"></i><span class="vol">出来高<em class="gn">233.4 K</em></span></div>
              <div class="order">
                <button class="sell"><b>2,754.0</b>売り</button>
                <div class="qty"><span>1.0</span><button>1K</button></div>
                <button class="buy"><b>2,755.0</b>買い</button>
              </div>
            </div>
            <div class="paxis"><svg class="cv"><g transform="translate(-2452 -80)" font-size="12">
              <g class="lbl"><text v-for="l in mainScale" :key="l.y" x="2460" :y="l.y + 3">{{ l.t }}</text></g>
              <rect x="2452" y="75" width="54" height="17" fill="#ffeb3b" /><text x="2460" y="87" fill="#222">2,856.5</text>
              <rect x="2452" y="126" width="54" height="17" fill="#5d5d5d" /><text x="2460" y="138" class="w">2,851.0</text>
              <rect x="2452" y="204" width="54" height="17" fill="#00bcd4" /><text x="2460" y="216" fill="#06222a">2,842.5</text>
              <rect x="2452" y="465" width="54" height="17" fill="#fbc02d" /><text x="2460" y="477" fill="#222">2,814.0</text>
              <rect x="2452" y="1010" width="43" height="17" fill="#ffeb3b" /><text x="2460" y="1022" fill="#5a5420">00:35</text>
              <rect x="2452" y="1074" width="54" height="21" fill="#363a45" /><text x="2460" y="1088" class="w">2,747.5</text>
            </g></svg></div>
            <div class="taxis"><svg class="cv"><g transform="translate(-682 -1330)" font-size="12" text-anchor="middle" class="lbl">
              <text v-for="t in mainTimes" :key="t[0]" :x="t[0]" y="1348">{{ t[1] }}</text>
              <rect x="2141" y="1330" width="117" height="23" fill="#363a45" /><text x="2178" y="1348" class="w">6月 11 (木)</text><text x="2234" y="1348" class="w">09:12</text>
            </g></svg></div>
            <div class="corner"></div>
          </section>

          <!-- 15 seconds -->
          <section class="chart sec">
            <div class="pane">
              <svg class="cv"><g transform="translate(-58 -735)">
                <rect x="116" y="735" width="3000" height="582" fill="#0d0203" />
                <rect x="116" y="925" width="3000" height="216" fill="#250609" />
                <g fill="#fff" fill-opacity="0.060"><rect v-for="l in secScale" :key="l.y" x="58" :y="l.y" width="3000" height="1" /></g>
                <path d="M102.500 735V1329" stroke="#65601c" stroke-dasharray="1 3" />
                <rect x="69" y="1180" width="32" height="149" fill="#0e225c" /><rect x="103" y="1282" width="25" height="47" fill="#12225f" />
                <g fill="#262e40"><rect x="221" y="1307" width="20" height="22" /><rect x="188" y="1323" width="12" height="6" /><rect x="135" y="1325" width="14" height="4" /><rect x="160" y="1326" width="14" height="3" /><rect x="250" y="1325" width="40" height="4" /></g>
                <path d="M66 1322l24-6 28-5h60l4 13h130" stroke="#57501a" stroke-dasharray="2 2" fill="none" />
                <rect x="487" y="887" width="93" height="38" fill="#0d1e1e" /><rect x="487" y="925" width="93" height="194" fill="#242122" /><rect x="487" y="1119" width="93" height="123" fill="#3b0d10" />
                <path d="M487 887.500h93" stroke="#13413b" /><path d="M486 1118.500h93" stroke="#8a8386" />
                <g v-for="(c, i) in secCandles" :key="i" :fill="c.f"><rect :x="c.cx" :y="c.wt" width="1" :height="c.wh" /><rect :x="c.x" :y="c.bt" :width="c.w" :height="c.bh" /></g>
                <path d="M102 1025.500H433" stroke="#a39442" stroke-dasharray="5 5" />
                <path :d="vwap" stroke="#3f5bf0" />
                <path d="M131 925H3000" stroke="#c8822f" stroke-width="2" />
                <rect x="50.500" y="921.500" width="489" height="2" fill="#4a2c00" stroke="#ff9800" />
                <rect x="195.500" y="1110.500" width="256" height="8" fill="#ff9800" fill-opacity="0.250" stroke="#ff9800" />
                <path d="M58 1244.500H3000" stroke="#6f7787" stroke-dasharray="5 5" />
                <path d="M376.500 735V1329" stroke="#75839b" stroke-dasharray="5 5" />
                <path v-for="(a, i) in secArrows" :key="'a' + i" :d="a.d" :stroke="a.c" stroke-width="2" fill="none" />
                <path d="M68 1300h13v16h-7v-9h-6zM90 1300h8l-7 16h-8z" fill="#e4e4e4" stroke="#000" /><circle cx="85" cy="1303.500" r="3" fill="#e4e4e4" />
                <rect x="581" y="1034" width="39" height="16" fill="#4d5be6" /><text x="600" y="1046" font-size="12" fill="#ffd9e6" text-anchor="middle">VWAP</text>
                <rect x="598" y="1234" width="22" height="20" fill="#363a45" /><circle cx="608.500" cy="1244.500" r="8" fill="none" stroke="#e6e6e6" /><path d="M604 1244.500h9M608.500 1240v9" stroke="#e6e6e6" />
                <rect x="552" y="1319" width="68" height="12" fill="#ffeb3b" /><text x="555" y="1332" font-size="12" fill="#333">Volume MA</text>
              </g></svg>
              <div class="legend"><Toyota /><span class="nm">トヨタ自動車 · 15秒 · TSE</span><i class="flag"></i><i class="live"></i><span class="vol">出来高<em class="rd">82 K</em></span></div>
              <div class="more"><button><Icon n="down" s="20" w="1.5" />9</button><span class="sync"><svg viewBox="0 0 18 18" width="18" height="18"><circle cx="9" cy="9" r="8.500" fill="#2a1a45" /><path d="M4 8a5 5 0 0 1 9-2M14 10a5 5 0 0 1-9 2M13 3v3h-3M5 15v-3h3" fill="none" stroke="#a274ff" stroke-width="1.500" /></svg></span></div>
              <div class="gap"><span>Daily Gap</span><b>-1.63%</b></div>
            </div>
            <div class="paxis"><svg class="cv"><g transform="translate(-620 -735)" font-size="12">
              <g class="lbl"><text v-for="l in secScale" :key="l.y" x="628" :y="l.y + 3">{{ l.t }}</text></g>
              <rect x="620" y="1034" width="54" height="16" fill="#2962ff" /><text x="628" y="1046" class="w">2,760.5</text>
              <rect x="620" y="1125" width="43" height="17" fill="#ffeb3b" /><text x="628" y="1138" fill="#5a5420">00:05</text>
              <rect x="620" y="1234" width="54" height="20" fill="#363a45" /><text x="628" y="1248" class="w">2,747.5</text>
              <rect x="620" y="1319" width="52" height="12" fill="#ffeb3b" /><text x="628" y="1332" fill="#333">29.27 K</text>
            </g></svg></div>
            <div class="taxis"><svg class="cv"><g transform="translate(-58 -1330)" font-size="12" text-anchor="middle" class="lbl">
              <rect x="309" y="1330" width="131" height="22" fill="#363a45" />
              <text v-for="t in secTimes" :key="t[0]" :x="t[0]" y="1348">{{ t[1] }}</text>
            </g></svg></div>
            <div class="corner"><Icon n="hex" s="18" w="1.6" /></div>
          </section>
        </div>

        <div class="foot">
          <button class="ib" aria-label="日付へ移動"><Icon n="date" s="24" w="1.2" /></button>
          <div class="grow"></div>
          <button class="clock">09:15:25 UTC+9</button><i class="vsep"></i><button class="adj">配当調整</button>
          <button class="ib" aria-label="拡大"><Icon n="expand" s="24" w="1.2" /></button>
        </div>
        <div class="dock">
          <button class="tvb" aria-label="TradingView"><svg viewBox="0 0 20 12" width="16" height="10"><path d="M1 1h8v9H5V5H1zM14 1h5l-4 9h-5z" fill="#eee" /><circle cx="11.500" cy="3" r="2" fill="#eee" /></svg></button>
          <div class="fav">
            <svg class="grip" width="8" height="16"><g fill="#555"><rect v-for="k in 6" :key="k" :x="(k % 2) * 5" :y="Math.floor((k - 1) / 2) * 5 + 1" width="2" height="2" /></g></svg>
            <button v-for="(t, i) in favTools" :key="i" :aria-label="t"><Icon :n="t" s="26" /></button>
          </div>
          <div class="grow"></div>
          <button class="ib" aria-label="開く"><Icon n="up" s="26" /></button>
          <button class="ib" aria-label="最大化"><Icon n="expand" s="26" /></button>
        </div>
      </main>

      <aside class="right">
        <button aria-label="ウォッチリスト"><Icon n="note" /></button>
        <button aria-label="アラート"><Icon n="alertR" /><span class="badge">65</span></button>
        <button aria-label="オブジェクト"><Icon n="layers" /></button>
        <button aria-label="チャット"><Icon n="chat" /></button>
        <div class="grow"></div>
        <button aria-label="スクリーナー"><Icon n="radar" /></button>
        <button aria-label="アイデア"><Icon n="idea" /></button>
        <button aria-label="カレンダー"><Icon n="calendar" /></button>
        <button aria-label="ニュース"><Icon n="rss" /></button>
        <button aria-label="通知"><Icon n="bell" /></button>
        <button class="apps" aria-label="製品"><svg width="34" height="34"><circle cx="17" cy="17" r="17" fill="#f2f2f2" /><g fill="#111"><rect v-for="k in 9" :key="k" :x="8 + ((k - 1) % 3) * 7" :y="8 + Math.floor((k - 1) / 3) * 7" width="4" height="4" rx="1" /></g></svg></button>
        <i class="hsep"></i>
        <button aria-label="ヘルプ"><Icon n="help" /></button>
      </aside>
    </div>

    <div class="toasts">
      <div class="pills"><button class="showmore">さらに表示 <b>3</b></button><button class="xall" aria-label="すべて閉じる"><Icon n="x" s="22" w="1.5" /></button></div>
      <div class="toast">
        <div class="ok"><svg width="22" height="22" viewBox="0 0 28 28"><circle cx="14" cy="14" r="14" fill="#3fbfa8" /><path d="M8 14l4 4 8-8" stroke="#10302b" stroke-width="3" fill="none" /></svg></div>
        <div class="msg">
          <p><span class="sym"><Toyota />TSE:7203</span>で成行注文が約定されました</p>
          <p class="l2"><span class="px">2,753.0 で 2,000</span>の売り</p>
        </div>
        <button class="xt" aria-label="閉じる"><Icon n="x" s="24" w="1.3" /></button>
      </div>
      <div class="under u1"></div><div class="under u2"></div>
    </div>
  </div>
</template>

<style>
body { margin: 0; background: #2e2e2e; }
</style>

<style scoped>
.app { display: flex; flex-direction: column; min-height: 100vh; background: #2e2e2e; color: #dbdbdb; font: 14px "Noto Sans", "Noto Sans CJK JP", sans-serif; position: relative; box-sizing: border-box; padding-bottom: 2px; }
button { background: none; border: 0; padding: 0; margin: 0; color: inherit; font: inherit; display: flex; align-items: center; justify-content: center; box-sizing: border-box; white-space: nowrap; flex: none; }
.grow { flex: 1; }
i, em { font-style: normal; }
svg text { font-family: "Noto Sans", "Noto Sans CJK JP", sans-serif; }

.tabs { display: flex; align-items: center; height: 35px; background: #3d3d3d; padding-right: 3px; }
.tab { flex: 0 1 117px; height: 35px; box-sizing: border-box; padding-left: 12px; display: flex; align-items: center; position: relative; overflow: hidden; }
.tab::after { content: ""; position: absolute; right: 0; top: 7px; height: 21px; width: 1px; background: #575757; }
.tab.active { background: #0f0f0f; border-radius: 8px 8px 0 0; }
.tab.active::after { display: none; }
.logo { flex: none; }
.code { width: 36px; margin-left: 4px; white-space: nowrap; }
.code.long { width: 70px; overflow: hidden; -webkit-mask: linear-gradient(90deg, #000 60%, transparent 92%); mask: linear-gradient(90deg, #000 60%, transparent 92%); }
.tri { width: 0; height: 0; border: 5px solid transparent; flex: none; }
.tri.r { border-top: 9px solid #f23645; border-bottom: 0; }
.tri.g { border-bottom: 9px solid #089981; border-top: 0; }
.tri.dim { opacity: 0.7; }
.chg { margin-left: 6px; white-space: nowrap; -webkit-mask: linear-gradient(90deg, rgba(0,0,0,.6), rgba(0,0,0,.4) 60%, transparent 75%); mask: linear-gradient(90deg, rgba(0,0,0,.6), rgba(0,0,0,.4) 60%, transparent 75%); }
.chg.dim { opacity: 0.5; }
.chg.r { color: #f23645; }
.chg.g { color: #089981; }
.close { position: absolute; right: 0; width: 28px; }
.win { width: 49px; }
.win.add { width: 36px; color: #9a9a9a; }
.dimmed, .dots { color: #9a9a9a; }
.vsep { width: 1px; height: 22px; background: #4a4a4a; flex: none; }

.bar { display: flex; align-items: center; height: 41px; background: #0f0f0f; padding: 3px 6px 0 12px; margin-bottom: 4px; box-sizing: border-box; }
.avatar { flex: none; }
.search { display: flex; align-items: center; width: 127px; height: 28px; margin-left: 16px; border-radius: 14px; background: #3d3d3d; box-sizing: border-box; padding: 0 1px 0 12px; flex: none; }
.search input { flex: 1; min-width: 0; background: none; border: 0; padding: 0; color: #dbdbdb; font: 700 14px "Noto Sans", sans-serif; outline: 0; }
.pen { width: 24px; height: 24px; border-radius: 12px; background: #0f0f0f; display: flex; align-items: center; justify-content: center; }
.plus { margin: 0 10px 0 9px; }
.sep { width: 1px; height: 22px; background: #3d3d3d; flex: none; }
.ints { display: flex; gap: 3px; margin: 0 2px 0 6px; }
.ints button { height: 34px; padding: 0 4px; border-radius: 6px; }
.ints .on, .sel { background: #3d3d3d; }
.chev { width: 30px; height: 34px; }
.style1 { margin: 0 8px 0 10px; }
.sel { width: 34px; height: 34px; border-radius: 6px; }
.tb { gap: 4px; }
.ind { margin-left: 8px; gap: 2px; }
.c2 { width: 48px; }
.gridb { width: 18px; }
.temps { display: flex; gap: 6px; margin: 0 15px 0 9px; }
.temps button { width: 22px; height: 22px; border: 1px solid #4a4a4a; border-radius: 11px; font-size: 11px; font-weight: 500; }
.alarm { margin-left: 12px; gap: 3px; }
.replay { margin-left: 13px; }
.c4 { width: 34px; margin-left: 7px; }
.undo { margin: 0 9px 0 8px; }
.faded { opacity: 0.45; }
.lay { flex-direction: column; margin-left: 8px; line-height: 16px; width: 60px; }
.lay b { color: #2962ff; font-size: 10px; line-height: 10px; }
.c3 { width: 28px; }
.jay { width: 22px; height: 22px; border-radius: 11px; background: #f2f2f2; color: #8a4b12; font-size: 11px; font-weight: 700; text-align: center; line-height: 22px; margin: 0 15px 0 3px; flex: none; }
.rights { display: flex; gap: 11px; margin: 0 10px 0 9px; }
.trade { display: flex; height: 30px; border: 1px solid #4a4a4a; border-radius: 15px; box-sizing: border-box; }
.tr { width: 91px; gap: 6px; border-right: 1px solid #4a4a4a; }
.td { width: 28px; }
.post { margin-left: 8px; width: 52px; height: 28px; border-radius: 14px; background: #f2f2f2; color: #0f0f0f; }

.body { flex: 1; display: flex; gap: 4px; }
.left { width: 52px; background: #0f0f0f; border-radius: 0 6px 0 0; display: flex; flex-direction: column; align-items: center; gap: 4px; padding: 8px 0 22px; box-sizing: border-box; flex: none; }
.left button { width: 34px; height: 34px; border-radius: 6px; }
.left .on { background: #3d3d3d; }
.left .white { background: #f2f2f2; color: #0f0f0f; }
.hsep { width: 36px; height: 1px; background: #4a4a4a; margin: 4px 0; flex: none; }
.right { width: 45px; background: #0f0f0f; border-radius: 6px 0 0 0; display: flex; flex-direction: column; align-items: center; padding: 1px 0 2px; box-sizing: border-box; flex: none; }
.right button { height: 45px; width: 45px; position: relative; }
.right button:nth-child(-n+4) { margin-bottom: 1px; }
.right .apps { margin-top: 2px; }
.right .hsep { margin: 5px 0 6px; width: 34px; }
.badge { position: absolute; top: 4px; left: 21px; width: 21px; height: 16px; line-height: 16px; border-radius: 8px; background: #f23645; color: #fff; font-size: 11px; font-weight: 500; }

.center { flex: 1; min-width: 0; display: flex; flex-direction: column; }
.charts { flex: 1; display: grid; grid-template-columns: minmax(0, 623fr) minmax(0, 1829fr); grid-template-rows: minmax(0, 650fr) minmax(0, 624fr); gap: 3px; }
.chart { display: grid; background: #000; border-radius: 4px; overflow: hidden; }
.day { grid-template: minmax(0, 1fr) 26px / minmax(0, 1fr) 65px; }
.main { grid-column: 2; grid-row: 1 / 3; grid-template: minmax(0, 1fr) 27px / minmax(0, 1fr) 59px; }
.sec { grid-template: minmax(0, 1fr) 25px / minmax(0, 1fr) 57px; border: 2px solid #9c9c9c; }
.pane { position: relative; min-width: 0; border-bottom: 1px solid #6b6b6b; border-right: 1px solid #6b6b6b; }
.paxis { border-bottom: 1px solid #6b6b6b; position: relative; }
.taxis { position: relative; border-right: 1px solid #6b6b6b; }
.corner { display: flex; align-items: center; justify-content: center; }
.cv { position: absolute; inset: 0; width: 100%; height: 100%; display: block; }
.lbl { fill: #d0d0d0; font-weight: 500; }
.w { fill: #fff; font-weight: 500; }
.legend { position: absolute; left: 9px; top: 4px; height: 24px; display: flex; align-items: center; white-space: nowrap; }
.sec .legend { left: 7px; top: 3px; }
.main .legend { left: 8px; }
.nm { font-size: 16px; line-height: 24px; margin-left: 5px; }
.flag { width: 12px; height: 12px; margin-left: 12px; background: #fbc02d; clip-path: polygon(0 0, 100% 0, 70% 50%, 100% 100%, 0 100%); }
.live { width: 8px; height: 8px; border: 5px solid #0a2420; border-radius: 9px; background: #42bda8; margin: 0 8px 0 12px; }
.vol { font-size: 13px; }
.rd { color: #f23645; }
.gn { color: #089981; }
.order { position: absolute; left: 8px; top: 34px; display: flex; gap: 8px; }
.order button { flex-direction: column; }
.sell, .buy { width: 66px; height: 34px; border-radius: 6px; color: #fff; font-size: 12px; line-height: 14px; }
.sell b, .buy b { font-weight: 500; font-size: 13px; }
.sell { background: #f23645; }
.buy { background: #2962ff; }
.qty { width: 31px; text-align: center; font-size: 10px; line-height: 11px; }
.qty button { width: 31px; height: 22px; margin-top: 1px; border: 1px solid #3d3d3d; border-radius: 5px; font-size: 13px; background: #000; }
.more { position: absolute; left: 7px; top: 31px; display: flex; align-items: center; gap: 16px; }
.more button { width: 32px; height: 21px; border: 1px solid #4a4a4a; border-radius: 3px; font-size: 12px; background: #0a0a0a; }
.gap { position: absolute; right: 10px; top: 8px; display: flex; gap: 1px; font-size: 10px; font-weight: 500; line-height: 18px; text-align: center; color: #fff; }
.gap span { width: 52px; background: #241a1e; }
.gap b { width: 38px; background: #9c2f33; font-weight: 500; }

.foot { height: 38px; background: #0f0f0f; margin-top: 1px; display: flex; align-items: center; padding: 0 12px 0 406px; }
.clock { margin-right: 10px; }
.adj { margin: 0 12px 0 10px; }
.dock { height: 38px; background: #0f0f0f; margin-top: 4px; display: flex; align-items: center; padding: 0 6px 0 8px; gap: 10px; }
.tvb { width: 24px; height: 22px; background: #1f1f1f; border-radius: 6px; }
.fav { margin-left: 410px; height: 38px; background: #1f1f1f; border-radius: 8px; display: flex; align-items: center; padding: 0 0 0 8px; }
.fav button { width: 38px; height: 38px; }
.grip { margin-right: 8px; flex: none; }

.toasts { position: absolute; left: 65px; bottom: 18px; width: 400px; height: 110px; }
.toast { position: absolute; left: 0; top: 23px; z-index: 3; width: 398px; height: 74px; background: #1f1f1f; border-radius: 10px; display: flex; box-sizing: border-box; padding: 4px; box-shadow: 0 2px 6px rgba(0, 0, 0, .7); }
.ok { width: 46px; background: #20302e; border-radius: 8px 0 0 8px; display: flex; align-items: center; justify-content: center; }
.msg { margin-left: 11px; padding-top: 4px; }
.msg p { margin: 0; height: 29px; display: flex; align-items: center; white-space: nowrap; font-size: 16px; }
.msg p.l2 { font-size: 14px; height: 30px; }
.sym { display: flex; align-items: center; gap: 3px; height: 22px; border-radius: 11px; background: #2b2b2b; padding: 0 6px 0 2px; font-size: 14px; font-weight: 500; }
.px { background: #3a1d20; color: #f77c80; border-radius: 6px; padding: 0 4px; line-height: 18px; margin-right: 3px; font-weight: 500; }
.xt { position: absolute; right: 5px; top: 13px; }
.under { position: absolute; background: #1a1a1a; border-bottom: 1px solid #2c2c2c; border-radius: 0 0 10px 10px; height: 20px; box-sizing: border-box; }
.u1 { left: 8px; top: 86px; width: 384px; z-index: 2; }
.u2 { left: 16px; top: 93px; width: 368px; background: #141414; z-index: 1; }
.pills { position: absolute; z-index: 4; left: 255px; top: 0; display: flex; gap: 9px; }
.pills button { background: #000; height: 26px; border-radius: 13px; color: #fff; }
.showmore { width: 108px; gap: 4px; font-size: 14px; }
.showmore b { width: 16px; height: 16px; border-radius: 8px; background: #fff; color: #000; font-size: 12px; line-height: 16px; }
.xall { width: 26px; }
</style>
